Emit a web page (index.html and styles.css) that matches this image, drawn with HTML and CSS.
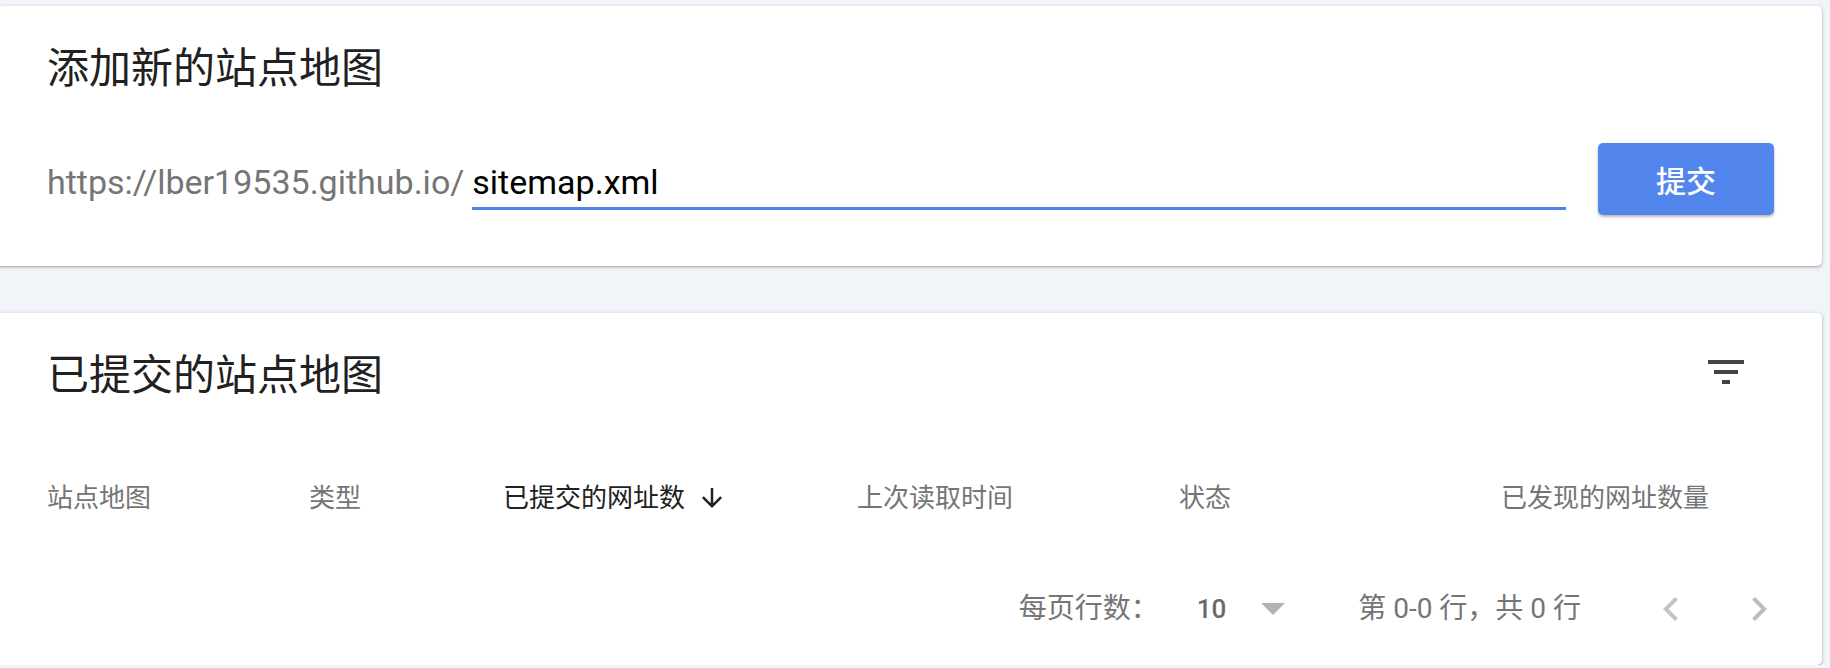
FILE: index.html
```html
<!DOCTYPE html>
<html lang="zh-CN">
<head>
<meta charset="utf-8">
<title>站点地图</title>
<link rel="stylesheet" href="styles.css">
</head>
<body>
<main class="page">
  <section class="card card-add">
    <h2 class="card-title">添加新的站点地图</h2>
    <div class="add-row">
      <div class="url">
        <span class="url-prefix">https://lber19535.github.io/</span>
        <div class="field"><input class="field-input" type="text" value="sitemap.xml"></div>
      </div>
      <button class="submit" type="button">提交</button>
    </div>
  </section>

  <section class="card card-list">
    <div class="list-head">
      <h2 class="card-title">已提交的站点地图</h2>
      <span class="icon-btn filter">
        <svg viewBox="0 0 24 24" width="48" height="48"><path d="M10 18h4v-2h-4v2zM3 6v2h18V6H3zm3 7h12v-2H6v2z" fill="#444"/></svg>
      </span>
    </div>
    <div class="table-head">
      <span class="th">站点地图</span>
      <span class="th">类型</span>
      <span class="th th-sorted">已提交的网址数
        <svg class="sort-arrow" viewBox="0 0 24 24" width="30" height="30"><path d="M20 12l-1.41-1.41L13 16.17V4h-2v12.17l-5.58-5.59L4 12l8 8 8-8z" fill="#212121"/></svg>
      </span>
      <span class="th">上次读取时间</span>
      <span class="th">状态</span>
      <span class="th">已发现的网址数量</span>
    </div>
    <div class="pager">
      <span class="pager-label">每页行数：</span>
      <span class="pager-size">10</span>
      <span class="pager-caret"></span>
      <span class="pager-range">第 0-0 行，共 0 行</span>
      <span class="icon-btn pager-prev">
        <svg viewBox="0 0 24 24" width="48" height="48"><path d="M15.41 7.41L14 6l-6 6 6 6 1.41-1.41L10.83 12z" fill="#c4c4c4"/></svg>
      </span>
      <span class="icon-btn pager-next">
        <svg viewBox="0 0 24 24" width="48" height="48"><path d="M10 6L8.59 7.41 13.17 12l-4.58 4.59L10 18l6-6z" fill="#bdbdbd"/></svg>
      </span>
    </div>
  </section>
</main>
</body>
</html>
```

FILE: styles.css
```css
* { box-sizing: border-box; }

html, body {
  margin: 0;
  padding: 0;
  background: #f1f4f9;
}

body {
  font-family: Roboto, "Noto Sans CJK SC", sans-serif;
  color: #212121;
}

.page {
  padding: 6px 8px 0 0;
}

.card {
  background: #fff;
  border-radius: 0 5px 5px 0;
  box-shadow: 0 1px 2px rgba(60, 64, 67, 0.35), 0 1px 4px 1px rgba(60, 64, 67, 0.12);
}

.card-title {
  margin: 0;
  font-size: 42px;
  line-height: 56px;
  font-weight: 400;
  color: #212121;
}

/* add card */
.card-add {
  height: 260px;
  padding: 35px 48px 0 47px;
}

.add-row {
  display: flex;
  align-items: center;
  height: 72px;
  margin-top: 46px;
}

.url {
  flex: 1;
  display: flex;
  align-items: baseline;
  margin-top: 13px;
  margin-right: 32px;
}

.url-prefix {
  font-size: 34px;
  line-height: 40px;
  color: #757575;
  margin-right: 8px;
  white-space: nowrap;
}

.field {
  flex: 1;
  border-bottom: 3px solid #4f83ec;
  padding-bottom: 5px;
}

.field-input {
  display: block;
  width: 100%;
  height: 40px;
  border: 0;
  padding: 0;
  margin: 0;
  outline: none;
  background: transparent;
  font-family: Roboto, "Noto Sans CJK SC", sans-serif;
  font-size: 34px;
  line-height: 40px;
  color: #000;
}

.submit {
  width: 176px;
  height: 72px;
  border: 0;
  border-radius: 5px;
  background: #5386ec;
  color: #fff;
  font-family: Roboto, "Noto Sans CJK SC", sans-serif;
  font-size: 30px;
  font-weight: 500;
  box-shadow: 0 2px 3px rgba(0, 0, 0, 0.28);
  cursor: pointer;
}

/* list card */
.card-list {
  margin-top: 47px;
  height: 352px;
  padding: 35px 0 0 47px;
}

.list-head {
  display: flex;
  justify-content: space-between;
  align-items: flex-start;
  padding-right: 72px;
}

.icon-btn {
  display: flex;
  width: 48px;
  height: 48px;
}

.table-head {
  display: grid;
  grid-template-columns: 262px 194px 354px 322px 322px 1fr;
  align-items: center;
  height: 64px;
  margin-top: 62px;
}

.th {
  display: flex;
  align-items: center;
  font-size: 26px;
  line-height: 36px;
  color: #757575;
  white-space: nowrap;
}

.th-sorted {
  color: #212121;
}

.sort-arrow {
  margin-left: 12px;
}

.pager {
  display: flex;
  justify-content: flex-end;
  align-items: center;
  height: 64px;
  margin-top: 47px;
  padding-right: 39px;
  font-size: 28px;
  line-height: 36px;
  color: #757575;
}

.pager-size {
  margin-left: 38px;
  font-size: 26px;
  font-weight: 500;
  color: #6a6a6a;
}

.pager-caret {
  width: 0;
  height: 0;
  margin-left: 35px;
  border-left: 12px solid transparent;
  border-right: 12px solid transparent;
  border-top: 12px solid #b3b3b3;
}

.pager-range {
  margin-left: 73px;
  white-space: nowrap;
}

.pager-prev {
  margin-left: 66px;
}

.pager-next {
  margin-left: 40px;
}
```
